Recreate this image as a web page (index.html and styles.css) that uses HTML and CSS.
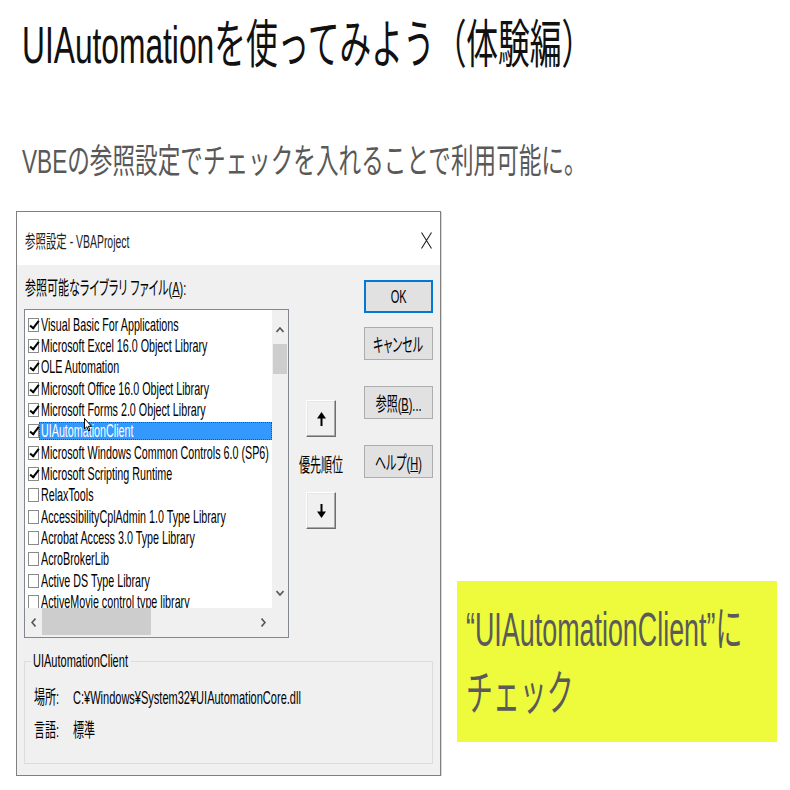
FILE: index.html
```html
<!DOCTYPE html>
<html lang="ja">
<head>
    <meta charset="UTF-8">
    <meta name="viewport" content="width=device-width, initial-scale=1.0">
    <title>UIAutomationを使ってみよう（体験編）</title>
    <link rel="stylesheet" href="styles.css">
</head>
<body>

<div class="page">
    <h1 class="title"><span class="narrow">UIAutomationを使ってみよう（体験編）</span></h1>
    <p class="lead"><span class="narrow">VBEの参照設定でチェックを入れることで利用可能に。</span></p>

    <div class="main">
        <!-- References dialog -->
        <div class="dialog">
            <div class="titlebar">
                <span class="sq">参照設定 - VBAProject</span>
                <svg class="close" width="11" height="17" viewBox="0 0 11 17">
                    <path d="M0.5 0.5 L10.5 16.5 M10.5 0.5 L0.5 16.5" stroke="#222" stroke-width="1.1" fill="none"/>
                </svg>
            </div>

            <div class="dialog-body">
                <div class="top">
                    <div class="refs">
                        <div class="caption"><span class="sq">参照可能なライブラリ ファイル(<u>A</u>):</span></div>
                        <div class="listbox">
                            <div class="rows">
                                <div class="row"><span class="check on"></span><span class="name"><span class="sq">Visual Basic For Applications</span></span></div>
                                <div class="row"><span class="check on"></span><span class="name"><span class="sq">Microsoft Excel 16.0 Object Library</span></span></div>
                                <div class="row"><span class="check on"></span><span class="name"><span class="sq">OLE Automation</span></span></div>
                                <div class="row"><span class="check on"></span><span class="name"><span class="sq">Microsoft Office 16.0 Object Library</span></span></div>
                                <div class="row"><span class="check on"></span><span class="name"><span class="sq">Microsoft Forms 2.0 Object Library</span></span></div>
                                <div class="row"><span class="check on"></span><span class="name selected"><span class="sq">UIAutomationClient</span></span></div>
                                <div class="row"><span class="check on"></span><span class="name"><span class="sq">Microsoft Windows Common Controls 6.0 (SP6)</span></span></div>
                                <div class="row"><span class="check on"></span><span class="name"><span class="sq">Microsoft Scripting Runtime</span></span></div>
                                <div class="row"><span class="check"></span><span class="name"><span class="sq">RelaxTools</span></span></div>
                                <div class="row"><span class="check"></span><span class="name"><span class="sq">AccessibilityCplAdmin 1.0 Type Library</span></span></div>
                                <div class="row"><span class="check"></span><span class="name"><span class="sq">Acrobat Access 3.0 Type Library</span></span></div>
                                <div class="row"><span class="check"></span><span class="name"><span class="sq">AcroBrokerLib</span></span></div>
                                <div class="row"><span class="check"></span><span class="name"><span class="sq">Active DS Type Library</span></span></div>
                                <div class="row"><span class="check"></span><span class="name"><span class="sq">ActiveMovie control type library</span></span></div>

                                <!-- mouse pointer -->
                                <svg class="pointer" width="8" height="14" viewBox="0 0 8 14">
                                    <path d="M0.5 0.5 L0.5 11 L2.8 8.8 L4.6 13 L6 12.3 L4.3 8.3 L7.5 8.3 Z" fill="#fff" stroke="#000" stroke-width="1"/>
                                </svg>
                            </div>
                            <div class="vscroll">
                                <div class="arrow up">
                                    <svg width="8" height="6" viewBox="0 0 8 6"><polyline points="0.5,5 4,1 7.5,5" fill="none" stroke="#555" stroke-width="1.6"/></svg>
                                </div>
                                <div class="thumb-v"></div>
                                <div class="spacer"></div>
                                <div class="arrow down">
                                    <svg width="8" height="6" viewBox="0 0 8 6"><polyline points="0.5,1 4,5 7.5,1" fill="none" stroke="#555" stroke-width="1.6"/></svg>
                                </div>
                            </div>
                            <div class="hscroll">
                                <div class="arrow side">
                                    <svg width="5" height="9" viewBox="0 0 5 9"><polyline points="4.5,0.5 1,4.5 4.5,8.5" fill="none" stroke="#555" stroke-width="1.6"/></svg>
                                </div>
                                <div class="thumb-h"></div>
                                <div class="spacer"></div>
                                <div class="arrow side">
                                    <svg width="5" height="9" viewBox="0 0 5 9"><polyline points="0.5,0.5 4,4.5 0.5,8.5" fill="none" stroke="#555" stroke-width="1.6"/></svg>
                                </div>
                            </div>
                            <div class="corner"></div>
                        </div>
                    </div>

                    <div class="priority">
                        <button class="move">
                            <svg width="9" height="14" viewBox="0 0 9 14"><path d="M4.5 0 L9 6.5 L0 6.5 Z" fill="#000"/><rect x="3.5" y="6" width="2" height="8" fill="#000"/></svg>
                        </button>
                        <div class="priority-label"><span class="sq">優先順位</span></div>
                        <button class="move">
                            <svg width="9" height="14" viewBox="0 0 9 14"><path d="M4.5 14 L9 7.5 L0 7.5 Z" fill="#000"/><rect x="3.5" y="0" width="2" height="8" fill="#000"/></svg>
                        </button>
                    </div>

                    <div class="actions">
                        <button class="btn default"><span class="sq">OK</span></button>
                        <button class="btn"><span class="sq">キャンセル</span></button>
                        <button class="btn"><span class="sq">参照(<u>B</u>)...</span></button>
                        <button class="btn"><span class="sq">ヘルプ(<u>H</u>)</span></button>
                    </div>
                </div>

                <fieldset class="info">
                    <legend><span class="sq">UIAutomationClient</span></legend>
                    <div class="info-row"><span class="sq">場所:</span><span class="sq">C:¥Windows¥System32¥UIAutomationCore.dll</span></div>
                    <div class="info-row"><span class="sq">言語:</span><span class="sq">標準</span></div>
                </fieldset>
            </div>
        </div>

        <!-- callout -->
        <div class="note">
            <span class="note-line"><span class="narrow">“UIAutomationClient”に</span></span>
            <span class="note-line"><span class="narrow">チェック</span></span>
        </div>
    </div>
</div>

</body>
</html>
```

FILE: styles.css
```css
body {
    margin: 0;
    background: #fff;
    font-family: "Liberation Sans", "Noto Sans CJK JP", sans-serif;
    overflow: hidden;
}

.page {
    padding-top: 15px;
}

/* the screenshot is stretched vertically, so text is narrowed */
.narrow,
.sq {
    display: inline-block;
    white-space: nowrap;
    transform-origin: 0 50%;
}

.sq {
    transform: scaleX(0.58);
}

.title {
    margin: 0;
    padding-left: 22px;
    font-size: 52px;
    font-weight: normal;
    line-height: 60px;
    color: #111;
    overflow: hidden;
}

.title .narrow {
    transform: scaleX(0.61);
}

.lead {
    margin: 66px 0 0;
    padding-left: 22px;
    font-size: 34px;
    line-height: 40px;
    color: #595959;
    overflow: hidden;
}

.lead .narrow {
    transform: scaleX(0.665);
}

.main {
    display: flex;
    align-items: flex-start;
    margin-top: 30px;
    padding-left: 16px;
}

/* dialog */
.dialog {
    width: 425px;
    height: 565px;
    flex-shrink: 0;
    box-sizing: border-box;
    border: 1px solid #7f7f7f;
    background: #f0f0f0;
    font-size: 19px;
    font-feature-settings: "palt" 1;
    color: #000;
    display: flex;
    flex-direction: column;
    box-shadow: 1px 1px 0 rgba(0, 0, 0, 0.15);
}

.titlebar {
    height: 53px;
    box-sizing: border-box;
    padding: 3px 8px 0;
    background: #fff;
    display: flex;
    align-items: center;
    justify-content: space-between;
    color: #222;
    font-size: 18px;
}

.dialog-body {
    flex: 1;
    padding: 14px 7px 0;
    display: flex;
    flex-direction: column;
}

.top {
    display: flex;
    align-items: flex-start;
}

.refs {
    width: 265px;
    flex-shrink: 0;
}

.caption {
    height: 20px;
    line-height: 20px;
    margin-bottom: 10px;
    padding-left: 1px;
}

.listbox {
    width: 265px;
    box-sizing: border-box;
    border: 1px solid #828790;
    display: grid;
    grid-template-columns: 247px 16px;
    grid-template-rows: 298px 29px;
}

.rows {
    position: relative;
    overflow: hidden;
    background: #fff;
    padding-top: 4px;
    box-sizing: border-box;
}

.rows .sq {
    transform: scaleX(0.565);
}

.row {
    height: 21.35px;
    display: flex;
    align-items: center;
    padding-left: 3px;
}

.check {
    position: relative;
    width: 11px;
    height: 14px;
    box-sizing: border-box;
    border: 1px solid #8a8a8a;
    background: #fff;
    flex-shrink: 0;
}

.check.on::after {
    content: "";
    position: absolute;
    left: 3px;
    top: 0px;
    width: 3px;
    height: 8px;
    border: solid #000;
    border-width: 0 2.5px 2.5px 0;
    transform: rotate(38deg);
}

.name {
    flex: 1;
    min-width: 0;
    height: 18px;
    line-height: 18px;
    padding-left: 2px;
    white-space: nowrap;
}

.name.selected {
    background: #3399ff;
    color: #fff;
    outline: 1px dotted #6b4a1a;
    outline-offset: -1px;
}

.pointer {
    position: absolute;
    left: 59px;
    top: 108px;
}

.vscroll {
    background: #f0f0f0;
    display: flex;
    flex-direction: column;
}

.vscroll .up {
    height: 34px;
    align-items: flex-start;
    padding-top: 17px;
    box-sizing: border-box;
}

.vscroll .down {
    height: 30px;
}

.arrow {
    display: flex;
    align-items: center;
    justify-content: center;
}

.thumb-v {
    height: 30px;
    margin: 0 1px;
    background: #cdcdcd;
}

.spacer {
    flex: 1;
}

.hscroll {
    background: #f0f0f0;
    display: flex;
}

.hscroll .side {
    width: 17px;
    height: 29px;
}

.thumb-h {
    width: 109px;
    height: 27px;
    background: #cdcdcd;
}

.corner {
    background: #f0f0f0;
}

/* move up / down */
.priority {
    margin-left: 17px;
    width: 30px;
    flex-shrink: 0;
    padding-top: 121px;
    display: flex;
    flex-direction: column;
    align-items: center;
}

.move {
    width: 30px;
    height: 37px;
    box-sizing: border-box;
    padding: 0;
    background: #f0f0f0;
    border: 1px solid;
    border-color: #fff #6e6e6e #6e6e6e #fff;
    box-shadow: inset -1px -1px 0 #a8a8a8, inset 1px 1px 0 #e6e6e6;
    display: flex;
    align-items: center;
    justify-content: center;
}

.priority-label {
    width: 30px;
    height: 20px;
    line-height: 20px;
    margin: 19px 0 16px;
    display: flex;
    justify-content: center;
}

.priority-label .sq {
    transform-origin: 50% 50%;
}

/* buttons on the right */
.actions {
    margin-left: auto;
    width: 69px;
    flex-shrink: 0;
    padding-top: 1px;
    display: flex;
    flex-direction: column;
}

.btn {
    height: 33px;
    box-sizing: border-box;
    padding: 0;
    border: 1px solid #adadad;
    background: #e1e1e1;
    color: #000;
    font: inherit;
    display: flex;
    align-items: center;
    justify-content: center;
}

.btn .sq {
    transform-origin: 50% 50%;
}

.btn + .btn {
    margin-top: 26px;
}

.btn.default {
    border: 2px solid #0078d7;
}

.btn.default + .btn {
    margin-top: 14px;
}

/* info group */
.info {
    margin: 14px 0 0;
    padding: 0 9px 22px;
    min-width: 0;
    border: 1px solid #dcdcdc;
}

.info legend {
    width: 96px;
    height: 18px;
    line-height: 18px;
    margin-left: -3px;
    padding: 0 2px;
    white-space: nowrap;
}

.info-row {
    display: grid;
    grid-template-columns: 39px auto;
    line-height: 20px;
    margin-top: 13px;
}

.info legend + .info-row {
    margin-top: 18px;
}

/* yellow callout */
.note {
    margin: 370px 0 0 16px;
    width: 320px;
    height: 161px;
    flex-shrink: 0;
    box-sizing: border-box;
    padding: 17px 0 0 9px;
    background: #eefb3c;
    color: #5a5a5a;
    font-size: 48px;
    overflow: hidden;
}

.note-line {
    display: block;
    height: 64px;
    line-height: 64px;
}

.note .narrow {
    transform: scaleX(0.56);
}
```
